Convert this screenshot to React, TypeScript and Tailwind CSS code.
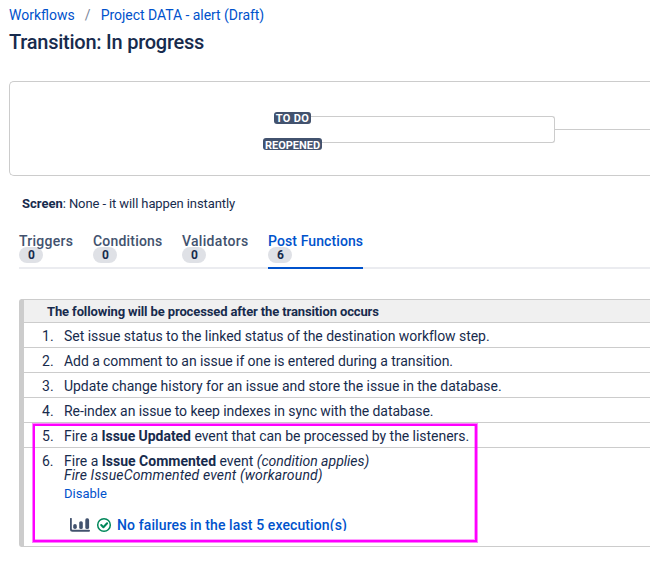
import type { ReactNode } from "react";

const tabs = [
  { label: "Triggers", count: 0, width: "w-[54px]", tracking: "tracking-[0.25px]" },
  { label: "Conditions", count: 0, width: "w-[69px]", tracking: "tracking-[0.2px]" },
  { label: "Validators", count: 0, width: "w-[66px]", tracking: "tracking-[0.3px]" },
  { label: "Post Functions", count: 6, width: "w-[95px]", tracking: "tracking-[0.1px]", active: true },
];

function Badge({ children, className }: { children: ReactNode; className: string }) {
  return (
    <span className={`block h-3 shrink-0 overflow-hidden whitespace-nowrap rounded-[3px] bg-[#42526e] text-center text-[11px] font-bold text-white ${className}`}>
      {children}
    </span>
  );
}

function Row({ n, tracking, children }: { n: number; tracking: string; children: ReactNode }) {
  return (
    <li className="flex h-[25px] border-b border-[#ccc] pl-[18px] leading-[26px]">
      <span className="w-[22px] shrink-0">{n}.</span>
      <span className={`whitespace-nowrap ${tracking}`}>{children}</span>
    </li>
  );
}

function ChartIcon() {
  return (
    <svg className="mt-[5px] h-[14px] w-5 shrink-0" viewBox="0 0 20 14" fill="#42526e">
      <path d="M0 .8a.9.900 0 0 1 1.800 0V11q0 .7.700.7H19a1 1 0 0 1 0 2H2.500Q0 13.700 0 11.200z" />
      <rect x="3.200" y="6" width="3.600" height="5" rx="1.800" />
      <rect x="9.200" y="3.200" width="3.600" height="7.800" rx="1.600" />
      <rect x="15.300" y="0.300" width="3.800" height="10.700" rx="1.600" />
    </svg>
  );
}

function CheckIcon() {
  return (
    <svg className="ml-[6px] mt-1 h-4 w-4 shrink-0" viewBox="0 0 16 16" fill="none" stroke="#00875a">
      <circle cx="8" cy="8" r="6.300" strokeWidth="1.500" />
      <path d="M5.200 8l2.200 2.200 3.700-4" strokeWidth="2" strokeLinecap="round" strokeLinejoin="round" />
    </svg>
  );
}

export default function App() {
  return (
    <main className="relative h-[570px] w-[650px] overflow-hidden bg-white font-['Roboto',sans-serif] text-sm text-[#172b4d]">
      <nav className="flex h-[30px] pl-[9px] pt-[5px] leading-5 text-[#0052cc]">
        <a>Workflows</a>
        <span className="w-[26px] text-center text-[#7a869a]">/</span>
        <a className="tracking-[-0.04px]">Project DATA - alert (Draft)</a>
      </nav>
      <h1 className="h-[51px] pl-[9px] text-xl font-medium leading-6 tracking-[-0.24px]">Transition: In progress</h1>

      <section className="ml-[9px] flex h-[95px] rounded-l-[5px] border border-r-0 border-[#ccc]">
        <div className="flex w-[545px] pl-[253px] pt-[30px]">
          <div className="flex w-[59px] flex-col items-center gap-[14px]">
            <Badge className="w-[37px] leading-[13px] tracking-[0.35px]">TO DO</Badge>
            <Badge className="w-[59px] leading-[15px]">REOPENED</Badge>
          </div>
          <div className="-ml-[11px] mt-1 flex h-[27px] flex-1 flex-col">
            <div className="h-[14px] rounded-tr-[3px] border-r border-t border-[#ccc]" />
            <div className="ml-[11px] h-[13px] rounded-br-[3px] border-b border-r border-[#ccc]" />
          </div>
        </div>
        <div className="mt-[47px] h-px flex-1 bg-[#ccc]" />
      </section>

      <p className="h-[57px] pl-[22px] pt-[18px] text-[13px] leading-5 tracking-[-0.1px]">
        <strong className="tracking-normal">Screen</strong>: None - it will happen instantly
      </p>

      <div className="ml-[19px] flex h-9 gap-5 shadow-[inset_0_-2px_0_#ebecf0]">
        {tabs.map((tab) => (
          <div key={tab.label} className={`h-9 shrink-0 whitespace-nowrap font-medium ${tab.width} ${tab.active ? "border-b-2 border-[#0052cc] text-[#0052cc]" : "text-[#42526e]"}`}>
            <div className={`h-[14px] leading-4 ${tab.tracking}`}>{tab.label}</div>
            <span className="block h-4 w-6 rounded-full bg-[#dfe1e6] pl-px text-center text-xs font-bold leading-4 text-[#172b4d]">{tab.count}</span>
          </div>
        ))}
      </div>

      <section className="ml-[19px] mt-[30px] h-[248px] rounded-l-[3px] border-b border-l-[5px] border-t border-[#ccc]">
        <h2 className="h-[23px] border-b border-[#ccc] bg-[#f0f0f0] pl-[23px] text-[13px] font-bold leading-6 tracking-[-0.12px]">
          The following will be processed after the transition occurs
        </h2>
        <ol>
          <Row n={1} tracking="tracking-[-0.04px]">Set issue status to the linked status of the destination workflow step.</Row>
          <Row n={2} tracking="tracking-[-0.065px]">Add a comment to an issue if one is entered during a transition.</Row>
          <Row n={3} tracking="tracking-[-0.035px]">Update change history for an issue and store the issue in the database.</Row>
          <Row n={4} tracking="tracking-[-0.075px]">Re-index an issue to keep indexes in sync with the database.</Row>
          <Row n={5} tracking="tracking-[-0.04px]">Fire a <strong>Issue Updated</strong> event that can be processed by the listeners.</Row>
          <li className="flex pl-[18px] pt-[6px] leading-[14px]">
            <span className="w-[22px] shrink-0">6.</span>
            <div>
              <div>Fire a <strong>Issue Commented</strong> event <em>(condition applies)</em></div>
              <em className="block tracking-[0.14px]">Fire IssueCommented event (workaround)</em>
              <a className="mt-1 block text-[13px] leading-4 text-[#0052cc]">Disable</a>
              <div className="ml-[6px] mt-[11px] flex h-5">
                <ChartIcon />
                <CheckIcon />
                <a className="ml-[5px] mt-1 h-[14px] overflow-hidden font-medium leading-4 tracking-[0.11px] text-[#0052cc]">No failures in the last 5 execution(s)</a>
              </div>
            </div>
          </li>
        </ol>
      </section>

      <div className="pointer-events-none absolute left-[33px] top-[424px] h-[118px] w-[444px] border-2 border-[#ff00ff] shadow-[0_0_0_1px_#ff00ff80,inset_-1px_-1px_0_#ff00ff60]" />
    </main>
  );
}
